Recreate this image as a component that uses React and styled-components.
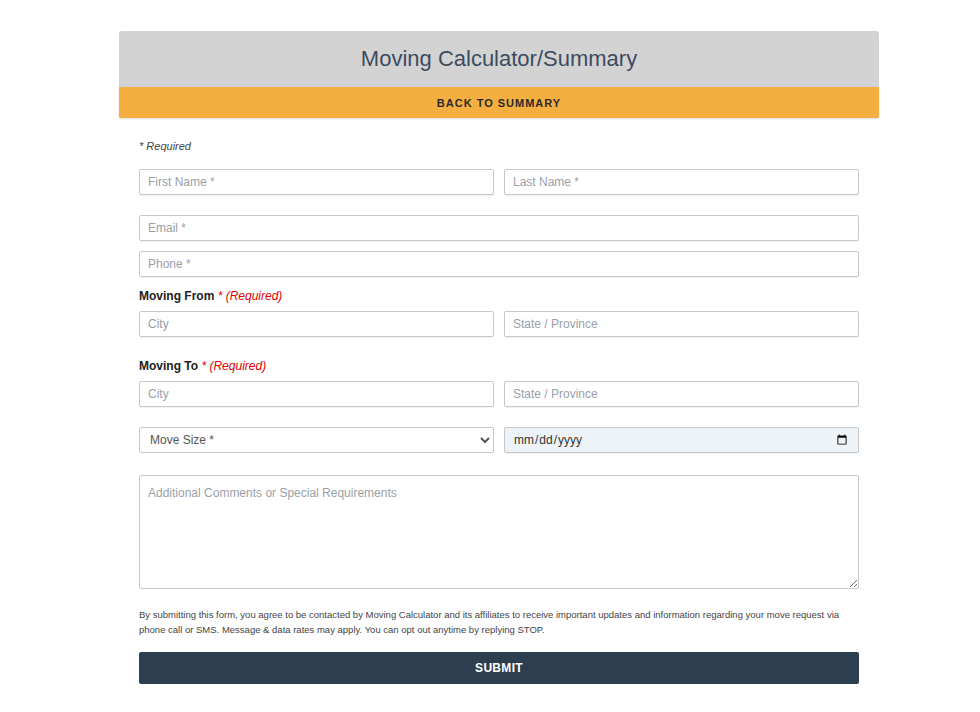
import React from "react";
import styled, { createGlobalStyle } from "styled-components";

const G = createGlobalStyle`
  body{margin:0;background:#fff;font-family:"Liberation Sans",Arial,sans-serif;}
  *{box-sizing:border-box;}
  ::placeholder{color:#9aa0a8;opacity:1;}
`;
const Card = styled.div`width:760px;margin:31px 0 0 119px;`;
const Head = styled.div`height:56px;background:#d3d3d3;border-radius:3px 3px 0 0;display:flex;align-items:center;justify-content:center;font-size:22px;color:#3d4b5e;`;
const Back = styled.div`height:31px;background:#f5ae40;display:flex;align-items:center;justify-content:center;font-size:11px;font-weight:bold;letter-spacing:1px;color:#2a2a2a;border-radius:0 0 2px 2px;box-shadow:0 1px 2px rgba(0,0,0,.15);`;
const Body = styled.form`padding:22px 20px 20px;`;
const Req = styled.div`font-size:11px;font-style:italic;color:#444;margin-bottom:17px;`;
const Row = styled.div`display:grid;grid-template-columns:${p=>p.$cols||"1fr 1fr"};gap:10px;margin-bottom:${p=>p.$mb||10}px;`;
const Input = styled.input`width:100%;height:26px;border:1px solid #c8c8c8;border-radius:2px;padding:0 8px;font:12px "Liberation Sans",Arial,sans-serif;color:#333;background:${p=>p.$bg||"#fff"};box-shadow:0 1px 1px rgba(0,0,0,.06);`;
const Select = styled.select`width:100%;height:26px;border:1px solid #c8c8c8;border-radius:2px;padding:0 6px;font:12px "Liberation Sans",Arial,sans-serif;color:#555;background:#fff;`;
const Label = styled.div`font-size:12px;font-weight:bold;color:#222;margin:2px 0 8px;span{color:#d00;font-weight:normal;font-style:italic;}`;
const Area = styled.textarea`width:100%;height:114px;border:1px solid #c8c8c8;border-radius:2px;padding:10px 8px;font:12px "Liberation Sans",Arial,sans-serif;margin:22px 0 18px;display:block;resize:vertical;`;
const Note = styled.p`font-size:9.5px;line-height:15px;color:#444;margin:0 0 15px;`;
const Submit = styled.button`width:100%;height:32px;background:#2d3e50;color:#fff;border:0;border-radius:2px;font:bold 12px "Liberation Sans",Arial,sans-serif;letter-spacing:.3px;`;

export default function App(){
  return <Card><G/>
    <Head>Moving Calculator/Summary</Head>
    <Back>BACK TO SUMMARY</Back>
    <Body>
      <Req>* Required</Req>
      <Row $mb={20}><Input placeholder="First Name *"/><Input placeholder="Last Name *"/></Row>
      <Row $cols="1fr"><Input placeholder="Email *"/></Row>
      <Row $cols="1fr" $mb={12}><Input placeholder="Phone *"/></Row>
      <Label>Moving From <span>* (Required)</span></Label>
      <Row $mb={22}><Input placeholder="City"/><Input placeholder="State / Province"/></Row>
      <Label>Moving To <span>* (Required)</span></Label>
      <Row $mb={20}><Input placeholder="City"/><Input placeholder="State / Province"/></Row>
      <Row $mb={0}><Select defaultValue=""><option value="">Move Size *</option></Select><Input type="date" lang="en-GB" $bg="#eef3f8"/></Row>
      <Area placeholder="Additional Comments or Special Requirements"/>
      <Note>By submitting this form, you agree to be contacted by Moving Calculator and its affiliates to receive important updates and information regarding your move request via phone call or SMS. Message &amp; data rates may apply. You can opt out anytime by replying STOP.</Note>
      <Submit type="button">SUBMIT</Submit>
    </Body>
  </Card>;
}
